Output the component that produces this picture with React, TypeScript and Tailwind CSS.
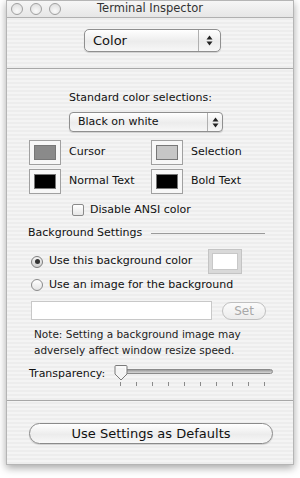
import React from "react";

const font = { fontFamily: '"DejaVu Sans", "Liberation Sans", sans-serif' };

function Arrows() {
  return (
    <svg width="7" height="11" viewBox="0 0 7 11">
      <path d="M3.5 0.5 L6.5 4.5 L0.5 4.5 Z" fill="#222" />
      <path d="M3.5 10.5 L6.5 6.5 L0.5 6.5 Z" fill="#222" />
    </svg>
  );
}

function Well({ color }: { color: string }) {
  return (
    <div className="w-[32px] h-[25px] border border-[#a0a0a0] bg-[#f7f7f7] flex items-center justify-center shrink-0">
      <div className="w-[22px] h-[15px] border border-[#777]" style={{ background: color }} />
    </div>
  );
}

export default function App() {
  return (
    <div className="w-[300px] h-[478px] bg-white relative overflow-hidden" style={font}>
      <div className="absolute left-[6px] top-0 w-[288px] h-[465px] flex flex-col border border-[#b5b5b5] shadow-[0_3px_8px_rgba(0,0,0,0.35)] bg-[repeating-linear-gradient(0deg,#ededed_0px,#ededed_2px,#f4f4f4_2px,#f4f4f4_4px)] text-[#111]">
        {/* title bar */}
        <div className="h-[17px] shrink-0 relative flex items-center justify-center bg-[linear-gradient(#f6f6f6,#e6e6e6)] border-b border-[#b0b0b0]">
          <div className="absolute left-[4px] top-[2px] flex gap-[7px]">
            {[0, 1, 2].map((i) => (
              <div key={i} className="w-[12px] h-[12px] rounded-full border border-[#a0a0a0] bg-[radial-gradient(circle_at_50%_70%,#fafafa,#dadada)]" />
            ))}
          </div>
          <span className="text-[11.5px] text-[#333] leading-none">Terminal Inspector</span>
        </div>

        {/* Color popup */}
        <div className="mt-[11px] h-[23px] pl-[77px] flex">
          <div className="w-[137px] h-[23px] rounded-[5px] border border-[#8f8f8f] bg-[linear-gradient(#ffffff,#ececec_55%,#f7f7f7)] shadow-[0_1px_1px_rgba(0,0,0,0.15)] flex">
            <div className="flex-1 flex items-center pl-[8px] text-[13px]">Color</div>
            <div className="w-[22px] border-l border-[#b0b0b0] flex items-center justify-center">
              <Arrows />
            </div>
          </div>
        </div>

        <div className="mt-[16px] h-px bg-[#a8a8a8]" />

        {/* Standard color selections */}
        <div className="mt-[21px] h-[16px] pl-[62px] flex items-center text-[11px]">Standard color selections:</div>

        <div className="mt-[6px] h-[20px] pl-[62px] flex">
          <div className="w-[154px] h-[20px] rounded-[4px] border border-[#8f8f8f] bg-[linear-gradient(#ffffff,#ececec_55%,#f7f7f7)] shadow-[0_1px_1px_rgba(0,0,0,0.15)] flex">
            <div className="flex-1 flex items-center pl-[8px] text-[11px]">Black on white</div>
            <div className="w-[15px] border-l border-[#b0b0b0] flex items-center justify-center">
              <Arrows />
            </div>
          </div>
        </div>

        {/* Wells */}
        <div className="mt-[8px] h-[25px] pl-[22px] flex items-center text-[11px]">
          <div className="w-[122px] flex items-center gap-[8px]">
            <Well color="#8a8a8a" />
            <span>Cursor</span>
          </div>
          <div className="flex items-center gap-[8px]">
            <Well color="#c6c6c6" />
            <span>Selection</span>
          </div>
        </div>
        <div className="mt-[4px] h-[25px] pl-[22px] flex items-center text-[11px]">
          <div className="w-[122px] flex items-center gap-[8px]">
            <Well color="#000000" />
            <span>Normal Text</span>
          </div>
          <div className="flex items-center gap-[8px]">
            <Well color="#000000" />
            <span>Bold Text</span>
          </div>
        </div>

        {/* checkbox */}
        <div className="mt-[8px] h-[16px] pl-[65px] flex items-center gap-[6px] text-[11px]">
          <div className="w-[12px] h-[12px] rounded-[2px] border border-[#8a8a8a] bg-[linear-gradient(#ffffff,#e6e6e6)]" />
          <span>Disable ANSI color</span>
        </div>

        {/* Background settings */}
        <div className="mt-[7px] h-[16px] pl-[21px] pr-[28px] flex items-center text-[11px]">
          <span className="w-[123px] shrink-0 whitespace-nowrap">Background Settings</span>
          <div className="flex-1 h-px bg-[#9a9a9a]" />
        </div>

        {/* Radio 1 */}
        <div className="mt-[8px] h-[25px] pl-[24px] flex items-center text-[11px]">
          <div className="w-[177px] shrink-0 flex items-center gap-[6px] whitespace-nowrap">
            <div className="w-[12px] h-[12px] shrink-0 rounded-full border border-[#7d7d7d] bg-[linear-gradient(#f4f4f4,#d0d0d0)] flex items-center justify-center">
              <div className="w-[5px] h-[5px] rounded-full bg-[#333]" />
            </div>
            <span>Use this background color</span>
          </div>
          <div className="w-[34px] h-[25px] shrink-0 border border-[#c4c4c4] bg-[#d9d9d9] p-[3px]">
            <div className="w-full h-full border border-[#c8c8c8] bg-white" />
          </div>
        </div>

        {/* Radio 2 */}
        <div className="mt-[3px] h-[16px] pl-[24px] flex items-center gap-[6px] text-[11px] whitespace-nowrap">
          <div className="w-[12px] h-[12px] shrink-0 rounded-full border border-[#8a8a8a] bg-[linear-gradient(#ffffff,#e4e4e4)]" />
          <span>Use an image for the background</span>
        </div>

        {/* field */}
        <div className="mt-[8px] h-[19px] pl-[24px] flex items-center">
          <div className="w-[181px] h-[19px] border border-[#c8c8c8] bg-white" />
          <div className="ml-[10px] w-[44px] h-[18px] rounded-full border border-[#c0c0c0] bg-[linear-gradient(#fbfbfb,#ececec)] flex items-center justify-center text-[12px] text-[#a8a8a8]">
            Set
          </div>
        </div>

        {/* note */}
        <div className="mt-[6px] pl-[27px] text-[10.5px] leading-[16px] text-[#222] whitespace-nowrap">
          <div>Note: Setting a background image may</div>
          <div>adversely affect window resize speed.</div>
        </div>

        {/* transparency */}
        <div className="mt-[6px] h-[26px] pl-[22px] flex items-start text-[11px]">
          <span className="mt-[2px] w-[87px] shrink-0">Transparency:</span>
          <div className="relative w-[157px] h-[26px]">
            <div className="absolute left-[0px] right-0 top-[5px] h-[5px] rounded-full border border-[#8a8a8a] bg-[linear-gradient(#9a9a9a,#d8d8d8)]" />
            <svg className="absolute left-[-2px] top-0" width="14" height="17" viewBox="0 0 14 17">
              <path d="M2 1.5 H12 Q13 1.5 13 2.5 V10 L7 16 L1 10 V2.5 Q1 1.5 2 1.5 Z" fill="#f4f4f4" stroke="#7a7a7a" strokeWidth="1" />
              <path d="M2.5 3 H11.5 V8" fill="none" stroke="#ffffff" strokeWidth="1" />
            </svg>
            <div className="absolute left-[4px] top-[18px] flex gap-[15px]">
              {Array.from({ length: 10 }).map((_, i) => (
                <div key={i} className="w-px h-[4px] bg-[#8a8a8a]" />
              ))}
            </div>
          </div>
        </div>

        <div className="mt-[10px] h-px bg-[#a8a8a8]" />

        {/* button */}
        <div className="mt-[22px] h-[21px] pl-[22px] flex">
          <div className="w-[244px] h-[21px] rounded-full border border-[#8a8a8a] bg-[linear-gradient(#ffffff,#ececec_55%,#f8f8f8)] shadow-[0_1px_1px_rgba(0,0,0,0.15)] flex items-center justify-center text-[13px]">
            Use Settings as Defaults
          </div>
        </div>
      </div>
    </div>
  );
}
